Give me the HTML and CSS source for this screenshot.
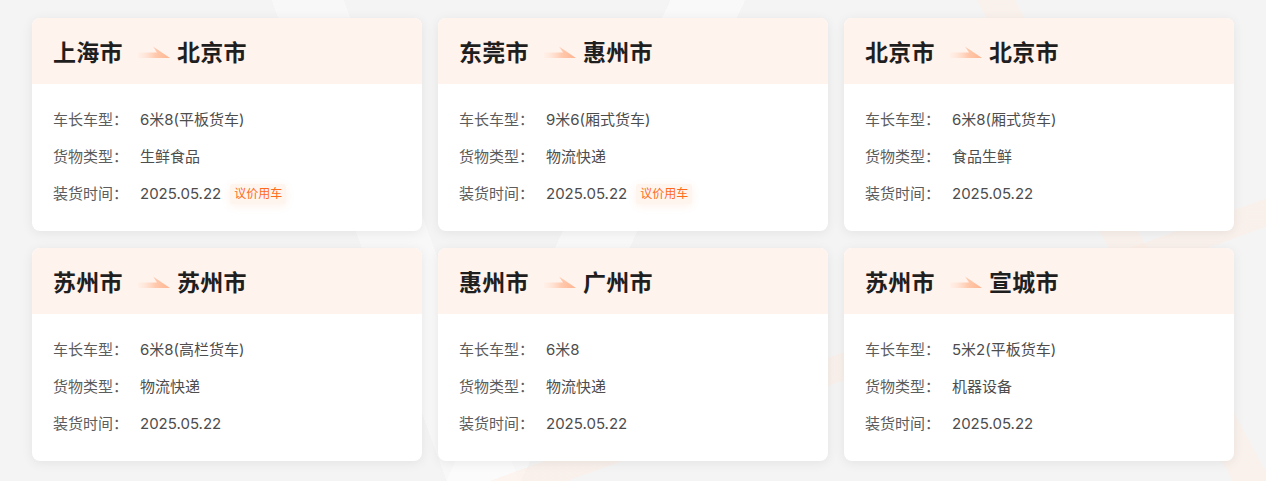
FILE: index.html
```html
<!DOCTYPE html>
<html lang="zh-CN">
<head>
<meta charset="utf-8">
<title>货源列表</title>
<link rel="stylesheet" href="styles.css">
</head>
<body>
<svg class="defs" width="0" height="0" aria-hidden="true">
  <defs>
    <linearGradient id="arrowFill" x1="0" y1="0" x2="1" y2="0">
      <stop offset="0" stop-color="#ffe8dc" stop-opacity="0.3"/>
      <stop offset="0.55" stop-color="#ffc9ad"/>
      <stop offset="1" stop-color="#ffb48f"/>
    </linearGradient>
    <symbol id="route-arrow" viewBox="0 0 32 12">
      <path d="M0 6.5 H19 L15 0.5 L32 12 H0 Z" fill="url(#arrowFill)"/>
    </symbol>
  </defs>
</svg>

<main class="grid">
  <article class="card">
    <header class="card-head">
      <span class="city">上海市</span>
      <svg class="arrow"><use href="#route-arrow"/></svg>
      <span class="city">北京市</span>
    </header>
    <dl class="card-body">
      <div class="row"><dt>车长车型：</dt><dd>6米8(平板货车)</dd></div>
      <div class="row"><dt>货物类型：</dt><dd>生鲜食品</dd></div>
      <div class="row"><dt>装货时间：</dt><dd>2025.05.22<span class="tag">议价用车</span></dd></div>
    </dl>
  </article>

  <article class="card">
    <header class="card-head">
      <span class="city">东莞市</span>
      <svg class="arrow"><use href="#route-arrow"/></svg>
      <span class="city">惠州市</span>
    </header>
    <dl class="card-body">
      <div class="row"><dt>车长车型：</dt><dd>9米6(厢式货车)</dd></div>
      <div class="row"><dt>货物类型：</dt><dd>物流快递</dd></div>
      <div class="row"><dt>装货时间：</dt><dd>2025.05.22<span class="tag">议价用车</span></dd></div>
    </dl>
  </article>

  <article class="card">
    <header class="card-head">
      <span class="city">北京市</span>
      <svg class="arrow"><use href="#route-arrow"/></svg>
      <span class="city">北京市</span>
    </header>
    <dl class="card-body">
      <div class="row"><dt>车长车型：</dt><dd>6米8(厢式货车)</dd></div>
      <div class="row"><dt>货物类型：</dt><dd>食品生鲜</dd></div>
      <div class="row"><dt>装货时间：</dt><dd>2025.05.22</dd></div>
    </dl>
  </article>

  <article class="card">
    <header class="card-head">
      <span class="city">苏州市</span>
      <svg class="arrow"><use href="#route-arrow"/></svg>
      <span class="city">苏州市</span>
    </header>
    <dl class="card-body">
      <div class="row"><dt>车长车型：</dt><dd>6米8(高栏货车)</dd></div>
      <div class="row"><dt>货物类型：</dt><dd>物流快递</dd></div>
      <div class="row"><dt>装货时间：</dt><dd>2025.05.22</dd></div>
    </dl>
  </article>

  <article class="card">
    <header class="card-head">
      <span class="city">惠州市</span>
      <svg class="arrow"><use href="#route-arrow"/></svg>
      <span class="city">广州市</span>
    </header>
    <dl class="card-body">
      <div class="row"><dt>车长车型：</dt><dd>6米8</dd></div>
      <div class="row"><dt>货物类型：</dt><dd>物流快递</dd></div>
      <div class="row"><dt>装货时间：</dt><dd>2025.05.22</dd></div>
    </dl>
  </article>

  <article class="card">
    <header class="card-head">
      <span class="city">苏州市</span>
      <svg class="arrow"><use href="#route-arrow"/></svg>
      <span class="city">宣城市</span>
    </header>
    <dl class="card-body">
      <div class="row"><dt>车长车型：</dt><dd>5米2(平板货车)</dd></div>
      <div class="row"><dt>货物类型：</dt><dd>机器设备</dd></div>
      <div class="row"><dt>装货时间：</dt><dd>2025.05.22</dd></div>
    </dl>
  </article>
</main>
</body>
</html>
```

FILE: styles.css
```css
* {
  box-sizing: border-box;
}

html,
body {
  margin: 0;
  height: 100%;
}

body {
  font-family: "Inter", "Noto Sans CJK SC", sans-serif;
  background-color: #f4f4f5;
  /* faint diagonal ribbons behind the cards */
  background-image:
    linear-gradient(160deg, transparent 0 70%, rgba(255, 236, 224, 0.45) 70% 73%, transparent 73%),
    linear-gradient(62deg, transparent 0 81%, rgba(255, 238, 228, 0.5) 81% 83.5%, transparent 83.5%),
    linear-gradient(115deg, transparent 0 45%, rgba(255, 255, 255, 0.45) 45% 50%, transparent 50%),
    linear-gradient(70deg, transparent 0 31%, rgba(255, 255, 255, 0.4) 31% 36%, transparent 36%);
  overflow: hidden;
}

.defs {
  position: absolute;
  width: 0;
  height: 0;
}

.grid {
  display: grid;
  grid-template-columns: repeat(3, 390px);
  column-gap: 16px;
  row-gap: 17px;
  padding: 18px 32px;
}

.card {
  background: #ffffff;
  border-radius: 8px;
  overflow: hidden;
  box-shadow: 0 2px 12px rgba(0, 0, 0, 0.07);
}

.card-head {
  display: flex;
  align-items: center;
  height: 66px;
  padding: 0 21px;
  background: #fff3ed;
}

.city {
  font-family: "Noto Sans CJK SC", sans-serif;
  font-size: 23px;
  font-weight: 700;
  color: #1f1f1f;
  letter-spacing: 0.3px;
}

.arrow {
  width: 32px;
  height: 12px;
  margin: 1px 7px 0 15px;
}

.card-body {
  margin: 0;
  padding: 25px 21px 26px;
  display: flex;
  flex-direction: column;
  gap: 15px;
}

.row {
  display: flex;
  align-items: center;
  height: 22px;
  font-size: 15px;
  line-height: 22px;
}

.row dt {
  width: 87px;
  color: #5c5c5c;
}

.row dd {
  margin: 0;
  display: flex;
  align-items: center;
  color: #4d4d4d;
}

.tag {
  margin-left: 9px;
  padding: 0 4px;
  height: 20px;
  line-height: 20px;
  font-size: 12px;
  color: #ff6a1a;
  background: #fff5ef;
  border-radius: 3px;
  box-shadow: 0 2px 8px rgba(255, 140, 80, 0.12);
}
```
